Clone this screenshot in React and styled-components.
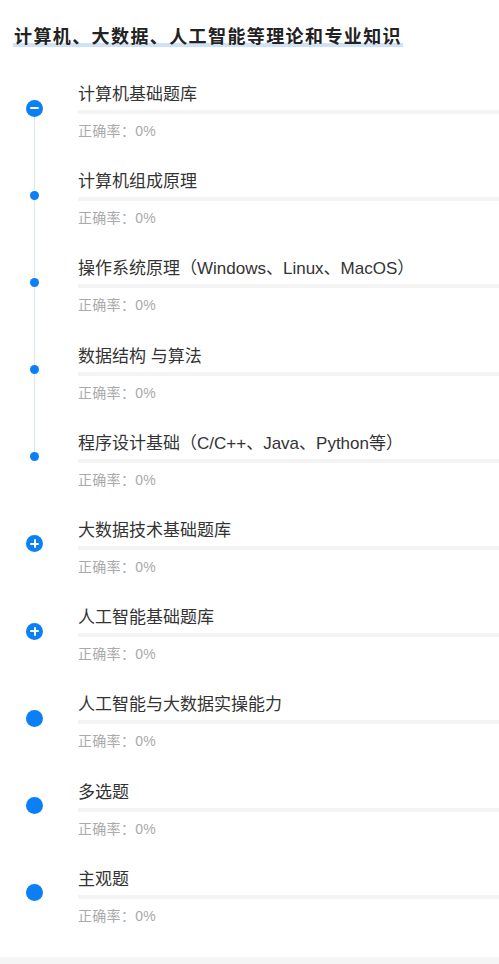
import React from 'react';
import styled, { createGlobalStyle } from 'styled-components';

const GlobalStyle = createGlobalStyle`
    body {
        margin:0;
        background:#fff;
        font-family:"Liberation Sans", "Noto Sans CJK SC", sans-serif;
    }
`;

const Page = styled.div`
    width:100%;
    min-height:964px;
    box-sizing:border-box;
    display:flex;
    flex-direction:column;
    overflow:hidden;
`;

const Header = styled.div`
    padding-top:25px;
    padding-left:13px;
    height:24px;
`;

const Title = styled.span`
    font-size:18px;
    line-height:24px;
    font-weight:bold;
    color:#222;
    letter-spacing:1.4px;
    padding:0 1px 3px;
    background:linear-gradient(to top, transparent 3px, #cfe2fa 3px, #cfe2fa 7px, transparent 7px);
`;

const List = styled.div`
    margin-top:32px;
    display:flex;
    flex-direction:column;
`;

const Item = styled.div`
    display:flex;
    height:87.2px;
`;

const Rail = styled.div`
    position:relative;
    width:78px;
    flex-shrink:0;

    &::after{
        content:'';
        display:${p => (p.line ? 'block' : 'none')};
        position:absolute;
        left:34px;
        top:27px;
        width:1px;
        height:87px;
        background:#dbe5f1;
    }
`;

const Node = styled.div`
    position:absolute;
    z-index:1;
    left:${p => 34.5 - p.size / 2}px;
    top:${p => 27 - p.size / 2}px;
    width:${p => p.size}px;
    height:${p => p.size}px;
    border-radius:50%;
    background:#0b7ff5;
    display:flex;
    align-items:center;
    justify-content:center;
`;

const Sign = styled.span`
    position:relative;
    width:9px;
    height:2px;
    background:#fff;
    border-radius:1px;

    &::after{
        content:'';
        display:${p => (p.plus ? 'block' : 'none')};
        position:absolute;
        left:3.5px;
        top:-3.5px;
        width:2px;
        height:9px;
        background:#fff;
        border-radius:1px;
    }
`;

const Body = styled.div`
    flex:1;
    min-width:0;
    display:flex;
    flex-direction:column;
`;

const Name = styled.div`
    font-size:17px;
    line-height:27px;
    color:#333;
    white-space:nowrap;
`;

const Bar = styled.div`
    margin-top:2px;
    height:4px;
    background:#f4f4f4;
`;

const Rate = styled.div`
    margin-top:6px;
    font-size:14px;
    line-height:22px;
    color:#aaa;
    letter-spacing:0.3px;
`;

const Footer = styled.div`
    flex:1;
    margin-top:4px;
    background:#f5f5f5;
    border-top:1px solid #f9f9f9;
`;

const items = [
    { name: '计算机基础题库', type: 'minus', line: true },
    { name: '计算机组成原理', type: 'dot', line: true },
    { name: '操作系统原理（Windows、Linux、MacOS）', type: 'dot', line: true },
    { name: '数据结构 与算法', type: 'dot', line: true },
    { name: '程序设计基础（C/C++、Java、Python等）', type: 'dot' },
    { name: '大数据技术基础题库', type: 'plus' },
    { name: '人工智能基础题库', type: 'plus' },
    { name: '人工智能与大数据实操能力', type: 'leaf' },
    { name: '多选题', type: 'leaf' },
    { name: '主观题', type: 'leaf' },
];

function Marker({ type }){
    if(type === 'dot') return <Node size={9}/>;
    if(type === 'leaf') return <Node size={17}/>;
    return(
        <Node size={17}>
            <Sign plus={type === 'plus'}/>
        </Node>
    );
}

export default function App(){
    return(
        <Page>
            <GlobalStyle/>
            <Header>
                <Title>计算机、大数据、人工智能等理论和专业知识</Title>
            </Header>
            <List>
                {items.map(item => (
                    <Item key={item.name}>
                        <Rail line={item.line}>
                            <Marker type={item.type}/>
                        </Rail>
                        <Body>
                            <Name>{item.name}</Name>
                            <Bar/>
                            <Rate>正确率：0%</Rate>
                        </Body>
                    </Item>
                ))}
            </List>
            <Footer/>
        </Page>
    );
}
